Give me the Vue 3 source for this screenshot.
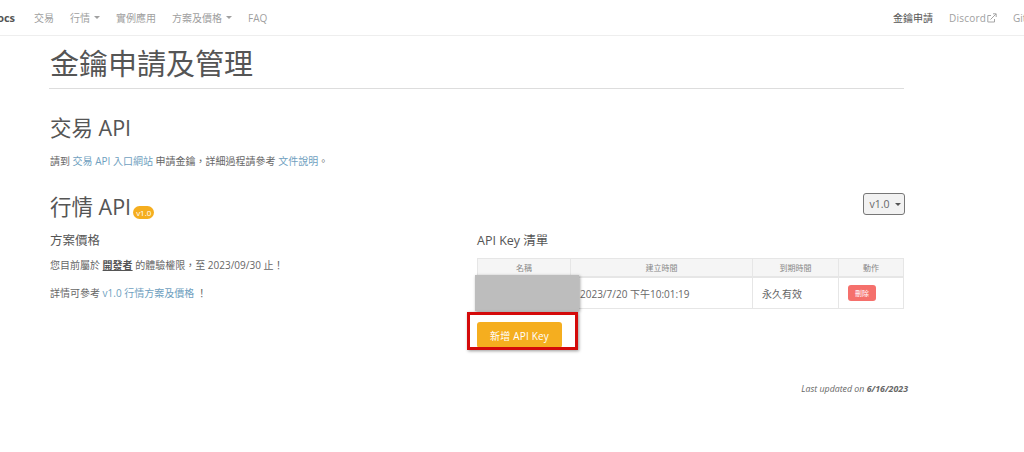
<script setup>
const leftNav = [
  { label: '交易' },
  { label: '行情', caret: true },
  { label: '實例應用' },
  { label: '方案及價格', caret: true },
  { label: 'FAQ' },
]
</script>

<template>
  <div class="page" lang="zh-Hant">
    <nav class="navbar">
      <b class="brand">Docs</b>
      <a v-for="item in leftNav" :key="item.label" class="nav-link">
        {{ item.label }}<i v-if="item.caret" class="caret"></i>
      </a>
      <span class="spacer"></span>
      <a class="nav-link active">金鑰申請</a>
      <a class="nav-link discord">
        Discord
        <svg width="10" height="10" viewBox="0 0 10 10" fill="none" stroke="#a5a5a5" stroke-width="1">
          <path d="M7.5 6v3H.8V2.5H4" />
          <path d="M3.5 6.5 9 1M6 .8h3.2V4" />
        </svg>
      </a>
      <a class="nav-link">GitHub</a>
    </nav>

    <main class="content">
      <h1>金鑰申請及管理</h1>

      <h2 class="trade-title">交易 API</h2>
      <p class="trade-text">
        請到 <a>交易 API 入口網站</a> 申請金鑰，詳細過程請參考 <a>文件說明</a>。
      </p>

      <div class="section-head">
        <h2>行情 API<span class="badge">v1.0</span></h2>
        <button class="version">v1.0<i class="caret"></i></button>
      </div>

      <div class="columns">
        <section>
          <h3>方案價格</h3>
          <p>您目前屬於 <strong>開發者</strong> 的體驗權限，至 2023/09/30 止！</p>
          <p class="detail">詳情可參考 <a>v1.0 行情方案及價格</a> ！</p>
        </section>

        <section class="keys">
          <h3>API Key 清單</h3>
          <table>
            <thead>
              <tr>
                <th class="c-name">名稱</th>
                <th class="c-created">建立時間</th>
                <th class="c-expire">到期時間</th>
                <th>動作</th>
              </tr>
            </thead>
            <tbody>
              <tr>
                <td></td>
                <td class="left">2023/7/20 下午10:01:19</td>
                <td class="left">永久有效</td>
                <td class="left"><button class="delete">刪除</button></td>
              </tr>
            </tbody>
          </table>
          <button class="add">新增 API Key</button>
          <div class="redaction"></div>
          <div class="highlight"></div>
        </section>
      </div>

      <p class="updated">Last updated on <b>6/16/2023</b></p>
    </main>
  </div>
</template>

<style>
html,
body {
  margin: 0;
  background: #fff;
  overflow: hidden;
}
</style>

<style scoped>
.page {
  width: 1024px;
  height: 452px;
  overflow: hidden;
  font-family: "Open Sans", "Noto Sans CJK TC", sans-serif;
  color: #666;
  font-size: 10px;
}
.navbar {
  display: flex;
  align-items: center;
  height: 35px;
  border-bottom: 1px solid #eee;
  white-space: nowrap;
}
.brand {
  margin-left: -11px;
  width: 45px;
  flex: none;
  font-size: 11px;
  color: #555;
}
.nav-link {
  color: #a0a0a0;
  font-size: 10px;
  margin-right: 16px;
  display: flex;
  align-items: center;
}
.nav-link.active {
  color: #555;
}
.discord {
  gap: 1px;
  letter-spacing: 0.2px;
}
.spacer {
  flex: 1;
}
.navbar .nav-link:last-child {
  margin-right: -22px;
}
.caret {
  display: inline-block;
  margin-left: 4px;
  border-top: 3px solid #a0a0a0;
  border-left: 3.5px solid transparent;
  border-right: 3.5px solid transparent;
}
.version .caret {
  margin-left: 5px;
  vertical-align: 2px;
  border-top-color: #555;
}
.content {
  position: relative;
  width: 854px;
  margin-left: 50px;
}
h1 {
  margin: 0 0 0 -1px;
  padding: 8px 0 5px 1px;
  height: 39px;
  line-height: 39px;
  font-size: 29px;
  font-weight: 400;
  color: #555;
  border-bottom: 1px solid #ddd;
}
h2 {
  margin: 0;
  font-size: 21.5px;
  font-weight: 400;
  line-height: 30px;
  color: #555;
}
.trade-title {
  margin-top: 24px;
}
p {
  margin: 0;
  line-height: 14px;
}
a {
  color: #6f9fc0;
}
.trade-text {
  margin-top: 11px;
}
.section-head {
  display: flex;
  justify-content: space-between;
  align-items: flex-start;
  margin-top: 24px;
  width: 855px;
}
.badge {
  display: inline-block;
  margin-left: 2px;
  padding: 0 3px;
  line-height: 13px;
  border-radius: 7px;
  background: #f5ae1f;
  color: #fff;
  font-size: 8px;
  vertical-align: -1px;
}
.version {
  width: 42px;
  height: 22px;
  margin-top: 1px;
  padding: 0 0 0 2px;
  border: 1px solid #777;
  border-radius: 3px;
  background: #f2f2f2;
  color: #666;
  font: inherit;
  font-size: 10.5px;
}
.columns {
  display: grid;
  grid-template-columns: 1fr 1fr;
  margin-top: 9px;
}
.keys {
  position: relative;
}
h3 {
  margin: 0 0 8px;
  font-size: 12.5px;
  font-weight: 400;
  line-height: 19px;
  color: #555;
}
.detail {
  margin-top: 14px;
}
strong {
  color: #555;
  text-decoration: underline;
}
table {
  width: 427px;
  table-layout: fixed;
  border-collapse: collapse;
  margin-top: 3px;
}
th,
td {
  border: 1px solid #e6e6e6;
  text-align: center;
  padding: 0;
}
th {
  height: 17px;
  background: #f5f5f5;
  font-size: 8px;
  font-weight: 400;
  color: #888;
  border-bottom-width: 2px;
}
td {
  height: 30px;
  font-size: 10px;
}
.c-name {
  width: 92px;
}
.c-created {
  width: 181px;
}
.c-expire {
  width: 85px;
}
td.left {
  text-align: left;
  padding-left: 9px;
}
.delete {
  display: block;
  width: 28px;
  height: 16px;
  border: 0;
  padding: 0;
  border-radius: 3px;
  background: #f5706c;
  color: #fff;
  font: inherit;
  font-size: 7px;
}
.add {
  display: block;
  margin-top: 13px;
  width: 85px;
  height: 26px;
  border: 0;
  padding: 0;
  border-radius: 3px;
  background: #f5ae1f;
  color: #fff;
  font: inherit;
  font-size: 10px;
  letter-spacing: 0.2px;
}
.redaction {
  position: absolute;
  left: -2px;
  top: 44px;
  width: 104px;
  height: 36px;
  background: #bdbdbd;
  box-shadow: 1px 1px 3px rgba(0, 0, 0, 0.4);
}
.highlight {
  position: absolute;
  left: -10px;
  top: 81px;
  width: 105px;
  height: 32px;
  border: 3px solid #d40a0a;
  box-shadow: 1px 1px 3px rgba(0, 0, 0, 0.4);
}
.updated {
  margin-top: 34px;
  width: 858px;
  text-align: right;
  font-size: 8.8px;
  font-style: italic;
  color: #666;
}
</style>
